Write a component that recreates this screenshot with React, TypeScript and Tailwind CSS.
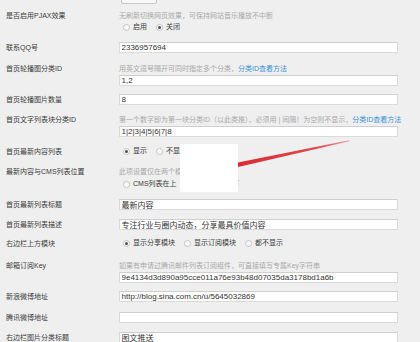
import React from "react";

const Radio = ({ checked, label, first }: { checked?: boolean; label: string; first?: boolean }) => (
  <span className={first ? "inline-flex items-center ml-[4px]" : "inline-flex items-center ml-[9px]"}>
    <span className="w-[7px] h-[7px] rounded-full border border-[#c4c4c4] bg-[#fbfbfb] flex items-center justify-center shrink-0">
      {checked ? <span className="w-[3px] h-[3px] rounded-full bg-[#505050]" /> : null}
    </span>
    <span className="ml-[3px] text-[#3c3c3c]">{label}</span>
  </span>
);

const Field = ({ value }: { value: string }) => (
  <input
    readOnly
    value={value}
    className="block w-[279px] h-[11px] bg-white border border-[#dadada] border-t-[#cfcfcf] pl-[1.5px] text-[8px] leading-[9px] text-[#333] outline-none"
  />
);

const Link = ({ children }: { children: React.ReactNode }) => (
  <span className="text-[#3a93d6]">{children}</span>
);

const Row = ({ label, className, children }: { label: string; className: string; children: React.ReactNode }) => (
  <div className={"flex " + className}>
    <div className="w-[119px] shrink-0 pl-[6px] leading-[11px] text-[#3c3c3c] whitespace-nowrap">{label}</div>
    <div className="w-[279px] flex flex-col">{children}</div>
  </div>
);

const Desc = ({ children }: { children: React.ReactNode }) => (
  <div className="leading-[11px] text-[#a9a9a9] whitespace-nowrap">{children}</div>
);

export default function App() {
  return (
    <div className="relative w-[420px] h-[342px] overflow-hidden bg-[#efefef] text-[7px] font-['Liberation_Sans','Noto_Sans_CJK_SC',sans-serif]">
      <div className="flex flex-col">
        <div className="flex -mt-[10px]">
          <div className="w-[121px] shrink-0" />
          <div className="w-[36px] h-[14px] rounded-[2px] border border-[#c8c8c8] bg-[#f7f7f7]" />
        </div>

        <Row label="是否启用PJAX效果" className="mt-[6px]">
          <Desc>无刷新切换网页效果，可保持网站音乐播放不中断</Desc>
          <div className="mt-[1px] h-[11px] flex items-center">
            <Radio first label="启用" />
            <Radio checked label="关闭" />
          </div>
        </Row>

        <Row label="联系QQ号" className="mt-[9px]">
          <Field value="2336957694" />
        </Row>

        <Row label="首页轮播图分类ID" className="mt-[10px]">
          <Desc>
            用英文逗号隔开可同时指定多个分类，<Link>分类ID查看方法</Link>
          </Desc>
          <div className="mt-[1px]">
            <Field value="1,2" />
          </div>
        </Row>

        <Row label="首页轮播图片数量" className="mt-[8px]">
          <Field value="8" />
        </Row>

        <Row label="首页文字列表块分类ID" className="mt-[9px]">
          <Desc>
            第一个数字即为第一块分类ID（以此类推），必须用 | 间隔！为空则不显示，<Link>分类ID查看方法</Link>
          </Desc>
          <div className="mt-[1px]">
            <Field value="1|2|3|4|5|6|7|8" />
          </div>
        </Row>

        <Row label="首页最新内容列表" className="mt-[9px]">
          <div className="h-[11px] flex items-center">
            <Radio first checked label="显示" />
            <Radio label="不显示" />
          </div>
        </Row>

        <Row label="最新内容与CMS列表位置" className="mt-[9px]">
          <Desc>此项设置仅在两个模块均显示时有效</Desc>
          <div className="mt-[2px] h-[11px] flex items-center">
            <Radio first label="CMS列表在上" />
            <Radio checked label="CMS列表在下" />
          </div>
        </Row>

        <Row label="首页最新列表标题" className="mt-[9px]">
          <Field value="最新内容" />
        </Row>

        <Row label="首页最新列表描述" className="mt-[9px]">
          <Field value="专注行业与圈内动态，分享最具价值内容" />
        </Row>

        <Row label="右边栏上方模块" className="mt-[8px]">
          <div className="h-[11px] flex items-center">
            <Radio first checked label="显示分享模块" />
            <Radio label="显示订阅模块" />
            <Radio label="都不显示" />
          </div>
        </Row>

        <Row label="邮箱订阅Key" className="mt-[11px]">
          <Desc>如果有申请过腾讯邮件列表订阅组件，可直接填写专属Key字符串</Desc>
          <div className="mt-[1px]">
            <Field value="9e4134d3d890a95cce011a76e93b48d07035da3178bd1a6b" />
          </div>
        </Row>

        <Row label="新浪微博地址" className="mt-[8px]">
          <Field value="http://blog.sina.com.cn/u/5645032869" />
        </Row>

        <Row label="腾讯微博地址" className="mt-[10px]">
          <Field value="" />
        </Row>

        <Row label="右边栏图片分类标题" className="mt-[9px]">
          <Field value="图文推送" />
        </Row>
      </div>

      <div className="absolute left-[180px] top-[144px] w-[58px] h-[48px] bg-white" />

      <svg className="absolute left-0 top-0 pointer-events-none" width="420" height="342" viewBox="0 0 420 342">
        <defs>
          <linearGradient id="arrowGrad" x1="238" y1="165" x2="350" y2="141" gradientUnits="userSpaceOnUse">
            <stop offset="0" stopColor="#dc2a2f" />
            <stop offset="0.7" stopColor="#e0484c" />
            <stop offset="1" stopColor="#eca0a2" />
          </linearGradient>
        </defs>
        <polygon points="238,162.5 349,140.3 349.5,141.2 238,167" fill="url(#arrowGrad)" />
      </svg>
    </div>
  );
}
